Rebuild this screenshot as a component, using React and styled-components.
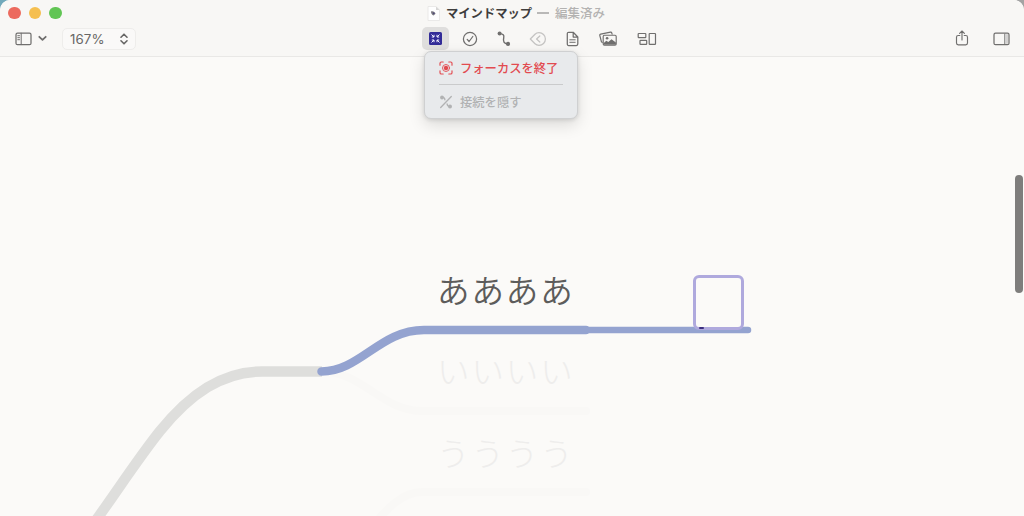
import React from "react";
import styled, { createGlobalStyle } from "styled-components";

const GlobalStyle = createGlobalStyle`
  * { box-sizing: border-box; }
  html, body { margin: 0; padding: 0; overflow: hidden; background: linear-gradient(90deg, #72a9bb 0 50%, #a3a3a3 50%); }
  body { font-family: Inter, "Noto Sans CJK JP", sans-serif; }
`;

const Window = styled.div`
  position: relative;
  display: flex;
  flex-direction: column;
  width: 1024px;
  height: 516px;
  overflow: hidden;
  border-radius: 10px 10px 0 0;
  background: #fbfaf8;
`;

const Header = styled.header`
  flex: none;
  height: 57px;
  background: #f8f7f5;
  border-bottom: 1px solid #e9e8e6;
`;

const TitleBar = styled.div`
  display: flex;
  align-items: center;
  height: 26px;
`;

const Lights = styled.div`
  display: flex;
  gap: 8px;
  width: 427px;
  padding-left: 8px;
`;

const Light = styled.span`
  width: 12.5px;
  height: 12.5px;
  border-radius: 50%;
  background: ${(p) => p.$color};
`;

const DocTitle = styled.div`
  display: flex;
  align-items: center;
  height: 26px;
  font-size: 12.3px;
  line-height: 26px;
  white-space: nowrap;
  color: #3f3e3d;
  font-family: "Noto Sans CJK JP", sans-serif;
`;

const DocName = styled.span`
  margin-left: 6px;
  font-weight: 700;
`;

const DocState = styled.span`
  display: flex;
  align-items: center;
  gap: 6px;
  margin-left: 5px;
  color: #b3b2b1;
  font-size: 12.5px;
  font-weight: 500;
`;

const Dash = styled.span`
  width: 12px;
  height: 1.5px;
  background: #b9b8b7;
`;

const Toolbar = styled.div`
  display: flex;
  align-items: center;
  height: 25px;
  color: #706f6e;
`;

const LeftTools = styled.div`
  display: flex;
  align-items: center;
  width: 422px;
  padding-left: 15px;
`;

const ZoomField = styled.div`
  display: flex;
  align-items: center;
  justify-content: space-between;
  width: 74px;
  height: 22px;
  margin-left: 15px;
  padding: 0 7px 0 7px;
  border: 1px solid #eeedeb;
  border-radius: 5px;
  background: #faf9f8;
  color: #686766;
  font-size: 13.3px;
  letter-spacing: 0.1px;
`;

const CenterTools = styled.div`
  display: flex;
  align-items: center;
  width: 520px;
`;

const ToolButton = styled.div`
  display: flex;
  align-items: center;
  justify-content: center;
  flex: none;
  width: ${(p) => p.$width}px;
  height: 23px;
  border-radius: 5px;
  color: ${(p) => (p.$dim ? "#c4c3c2" : "inherit")};
  background: ${(p) => (p.$active ? "#dfdedd" : "transparent")};
`;

const RightTools = styled.div`
  display: flex;
  align-items: center;
  gap: 24px;
  padding-left: 13px;
`;

const Glyph = styled.svg`
  display: block;
  flex: none;
  fill: none;
  stroke: currentColor;
  stroke-width: ${(p) => p.$weight || 1.25};
  stroke-linecap: round;
  stroke-linejoin: round;
`;

const ChevronGlyph = styled(Glyph)`
  margin-left: 6px;
`;

const Menu = styled.div`
  position: absolute;
  z-index: 2;
  left: 424px;
  top: 51px;
  width: 154px;
  height: 68px;
  padding: 0 14px;
  border: 1px solid #cfd0d1;
  border-radius: 7px;
  background: #e8eaec;
  box-shadow: 0 6px 16px rgba(0, 0, 0, 0.13), 0 1px 4px rgba(0, 0, 0, 0.12);
`;

const MenuItem = styled.div`
  display: flex;
  align-items: center;
  gap: 7px;
  height: 32px;
  color: ${(p) => (p.$danger ? "#e24b50" : "#b1b2b3")};
  font-family: "Noto Sans CJK JP", sans-serif;
  font-size: 12.3px;
  font-weight: 500;
  white-space: nowrap;

  & + & { border-top: 1px solid #cacbcc; height: 35px; }
`;

const Canvas = styled.main`
  position: relative;
  flex: 1;
`;

const Branches = styled.svg`
  position: absolute;
  left: 0;
  top: 0;
  fill: none;
`;

const NodeLabel = styled.div`
  position: absolute;
  left: 437px;
  top: ${(p) => p.$top}px;
  height: 48px;
  line-height: 48px;
  font-family: "Noto Sans CJK JP", sans-serif;
  font-size: 32.5px;
  font-weight: ${(p) => (p.$faded ? 300 : 350)};
  letter-spacing: 1.9px;
  white-space: nowrap;
  color: ${(p) => (p.$faded ? "#eeedec" : "#5d5c5b")};
`;

const SelectedNode = styled.div`
  position: absolute;
  left: 693px;
  top: 218px;
  width: 51px;
  height: 54.5px;
  border: 3px solid #afa9dd;
  border-radius: 6px;
  background: #fbfaf8;
`;

const Caret = styled.span`
  position: absolute;
  left: 3px;
  bottom: -2px;
  width: 5px;
  height: 1.5px;
  border-radius: 1px;
  background: #3c2f80;
`;

const ScrollThumb = styled.div`
  position: absolute;
  left: 1015px;
  top: 118px;
  width: 8px;
  height: 118px;
  border-radius: 4px;
  background: #7e7d7c;
`;

const DocIcon = () => (
  <svg width="13" height="15" viewBox="0 0 13 15">
    <path d="M1 .5h8l3.5 3.5v10.5H1z" fill="#fefefe" stroke="#e6e5e3" strokeWidth=".8" />
    <path d="M9 .5V4h3.5z" fill="#d7d6d5" />
    <path d="M4 5.5c2-.6 4 .4 4.5 2.2L6.6 9.5C5 9 4 7.5 4 5.5z" fill="#77757f" />
    <circle cx="6.8" cy="7.3" r=".7" fill="#3f3a78" />
  </svg>
);

const SidebarIcon = () => (
  <Glyph width="17" height="14" viewBox="0 0 17 14">
    <rect x="1" y="1.2" width="15" height="11.5" rx="1.5" />
    <path d="M6.2 1.2v11.5M2.8 3.7h1.7M2.8 5.7h1.7M2.8 7.7h1.7" strokeWidth="1" />
  </Glyph>
);

const InspectorIcon = () => (
  <Glyph width="17" height="14" viewBox="0 0 17 14">
    <rect x="1" y="1.2" width="15" height="11.5" rx="1.5" />
    <path d="M11.8 2v10" strokeWidth="1" />
    <rect x="12.6" y="2.2" width="2.4" height="9.5" fill="#d3d2d1" stroke="none" />
  </Glyph>
);

const ShareIcon = () => (
  <Glyph width="14" height="17" viewBox="0 0 14 17" $weight={1.15}>
    <path d="M4.8 5.5H3.2C2 5.500 1.500 6.100 1.500 7.200v5.900c0 1.100.600 1.700 1.700 1.700h7.600c1.100 0 1.700-.6 1.700-1.700V7.200c0-1.100-.5-1.700-1.700-1.700H9.200M7 10V1M4.600 3.300 7 1l2.400 2.300" />
  </Glyph>
);

const FocusIcon = () => (
  <svg width="13" height="13" viewBox="0 0 13 13">
    <rect width="13" height="13" rx="1.6" fill="#332c98" />
    <path d="M2.500 2.500 5 5M5 2.800V5H2.800M10.500 2.500 8 5M8 2.800V5h2.200M2.500 10.500 5 8M2.800 8H5v2.200M10.500 10.500 8 8M10.200 8H8v2.200" fill="none" stroke="#f2f1ff" strokeWidth="1" />
  </svg>
);

const CheckIcon = () => (
  <Glyph width="16" height="16" viewBox="0 0 16 16">
    <circle cx="8" cy="8" r="6.6" />
    <path d="m5.200 8.400 1.900 2.100 3.700-5" />
  </Glyph>
);

const ConnectIcon = () => (
  <Glyph width="14" height="16" viewBox="0 0 14 16" $weight={1.4}>
    <path d="M2.600 2.600c3.500.2 4.800 1.200 4.100 4.300-.8 3.500.2 5.800 4 6" />
    <circle cx="2.6" cy="2.6" r="2" fill="currentColor" stroke="none" />
    <circle cx="11" cy="12.9" r="2.1" fill="currentColor" stroke="none" />
  </Glyph>
);

const FoldIcon = () => (
  <Glyph width="18" height="16" viewBox="0 0 18 16">
    <path d="M1.300 8 6 3.200C7.200 2 8.400 1.600 10 1.600a6.400 6.400 0 0 1 0 12.800c-1.600 0-2.800-.4-4-1.600z" />
    <path d="M10.800 5 7.600 8l3.200 3" />
  </Glyph>
);

const NoteIcon = () => (
  <Glyph width="13" height="16" viewBox="0 0 13 16">
    <path d="M2.700 1.300h4.500L11.800 6v7.100c0 .9-.5 1.400-1.400 1.400H2.700c-.9 0-1.400-.5-1.400-1.400V2.700c0-.9.5-1.400 1.400-1.400zM7.200 1.500V6h4.400" />
    <path d="M3.800 8.800h5.400M3.800 11.300h5.400" strokeWidth="1" />
  </Glyph>
);

const PhotosIcon = () => (
  <Glyph width="18" height="16" viewBox="0 0 18 16" $weight={1.15}>
    <path d="M3.300 11.300 2.500 11 .8 4.500c-.2-.8.2-1.200.9-1.400l9.800-2c.7-.1 1.100.2 1.300.9l.3 1.200" />
    <rect x="4.2" y="4.2" width="13" height="10" rx="1.2" fill="#f8f7f5" />
    <path d="m4.500 12.200 2.800-2.500 2 1.400 3.200-2.900 4.400 3.400v2.200H4.500z" fill="currentColor" stroke="none" />
    <circle cx="8.1" cy="7.3" r="1.3" fill="currentColor" stroke="none" />
  </Glyph>
);

const LayoutIcon = () => (
  <Glyph width="20" height="14" viewBox="0 0 20 14" $weight={1.2}>
    <rect x="1.2" y="1.5" width="7.6" height="4.2" rx=".6" />
    <rect x="3" y="8.3" width="6.7" height="4" rx=".6" />
    <rect x="12.2" y="1.5" width="6.3" height="10.8" rx=".6" />
  </Glyph>
);

const TargetIcon = () => (
  <Glyph width="14" height="14" viewBox="0 0 14 14" $weight={1.15}>
    <path d="M1 4.200V2.300C1 1.500 1.500 1 2.300 1h1.900M9.800 1h1.900c.8 0 1.300.5 1.300 1.300v1.900M13 9.800v1.900c0 .8-.5 1.300-1.300 1.300H9.800M4.200 13H2.300C1.500 13 1 12.500 1 11.700V9.800" />
    <circle cx="7" cy="7" r="3.5" strokeWidth=".9" />
    <circle cx="7" cy="7" r="2.2" fill="currentColor" stroke="none" />
  </Glyph>
);

const HideLinkIcon = () => (
  <Glyph width="14" height="14" viewBox="0 0 14 14" $weight={1.3}>
    <path d="M12.300 1.500 1.700 12.500M3 2.200c1.900.2 2.900 1 2.900 2.600M8.100 9c.1 1.700 1 2.500 2.900 2.700" />
    <circle cx="3" cy="2.500" r="1.9" fill="currentColor" stroke="none" />
    <circle cx="11" cy="11.600" r="2" fill="currentColor" stroke="none" />
  </Glyph>
);

const tools = [
  { id: "focus", width: 27, active: true, Icon: FocusIcon },
  { id: "task", width: 42, Icon: CheckIcon },
  { id: "connect", width: 26, Icon: ConnectIcon },
  { id: "fold", width: 41, dim: true, Icon: FoldIcon },
  { id: "note", width: 28, Icon: NoteIcon },
  { id: "photos", width: 44, Icon: PhotosIcon },
  { id: "layout", width: 34, Icon: LayoutIcon },
];

export default function App() {
  return (
    <>
      <GlobalStyle />
      <Window>
        <Header>
          <TitleBar>
            <Lights>
              <Light $color="#ec6a5e" />
              <Light $color="#f5bf4f" />
              <Light $color="#61c554" />
            </Lights>
            <DocTitle>
              <DocIcon />
              <DocName>マインドマップ</DocName>
              <DocState>
                <Dash />
                編集済み
              </DocState>
            </DocTitle>
          </TitleBar>
          <Toolbar>
            <LeftTools>
              <SidebarIcon />
              <ChevronGlyph width="9" height="7" viewBox="0 0 9 7" $weight={1.8}>
                <path d="m1.300 1.800 3.200 3 3.200-3" />
              </ChevronGlyph>
              <ZoomField>
                167%
                <Glyph width="8" height="12" viewBox="0 0 8 12" $weight={1.6}>
                  <path d="M1 4.200 4 1.200l3 3M1 7.800l3 3 3-3" />
                </Glyph>
              </ZoomField>
            </LeftTools>
            <CenterTools>
              {tools.map(({ id, width, active, dim, Icon }) => (
                <ToolButton key={id} $width={width} $active={active} $dim={dim}>
                  <Icon />
                </ToolButton>
              ))}
            </CenterTools>
            <RightTools>
              <ShareIcon />
              <InspectorIcon />
            </RightTools>
          </Toolbar>
        </Header>

        <Menu>
          <MenuItem $danger>
            <TargetIcon />
            フォーカスを終了
          </MenuItem>
          <MenuItem>
            <HideLinkIcon />
            接続を隠す
          </MenuItem>
        </Menu>

        <Canvas>
          <Branches width="1024" height="459" viewBox="0 57 1024 459">
            <g stroke="#f9f8f6" strokeWidth="8" strokeLinecap="round">
              <path d="M322 371.500C362 371.500 382 411 422 411H586" />
              <path d="M322 560C362 560 382 492 422 492H586" />
            </g>
            <path d="M70 556L99 516C119 488 140 456 160 431C190 394 222 371.500 262 371.500H322" stroke="#dededc" strokeWidth="10.5" />
            <path d="M321.500 371.500C360 371.500 380 330 424 330H586" stroke="#94a3d0" strokeWidth="8.5" strokeLinecap="round" />
            <path d="M584 330H748" stroke="#94a3d0" strokeWidth="6.5" strokeLinecap="round" />
          </Branches>
          <NodeLabel $top={208}>ああああ</NodeLabel>
          <NodeLabel $top={289} $faded>いいいい</NodeLabel>
          <NodeLabel $top={371} $faded>うううう</NodeLabel>
          <SelectedNode>
            <Caret />
          </SelectedNode>
          <ScrollThumb />
        </Canvas>
      </Window>
    </>
  );
}
